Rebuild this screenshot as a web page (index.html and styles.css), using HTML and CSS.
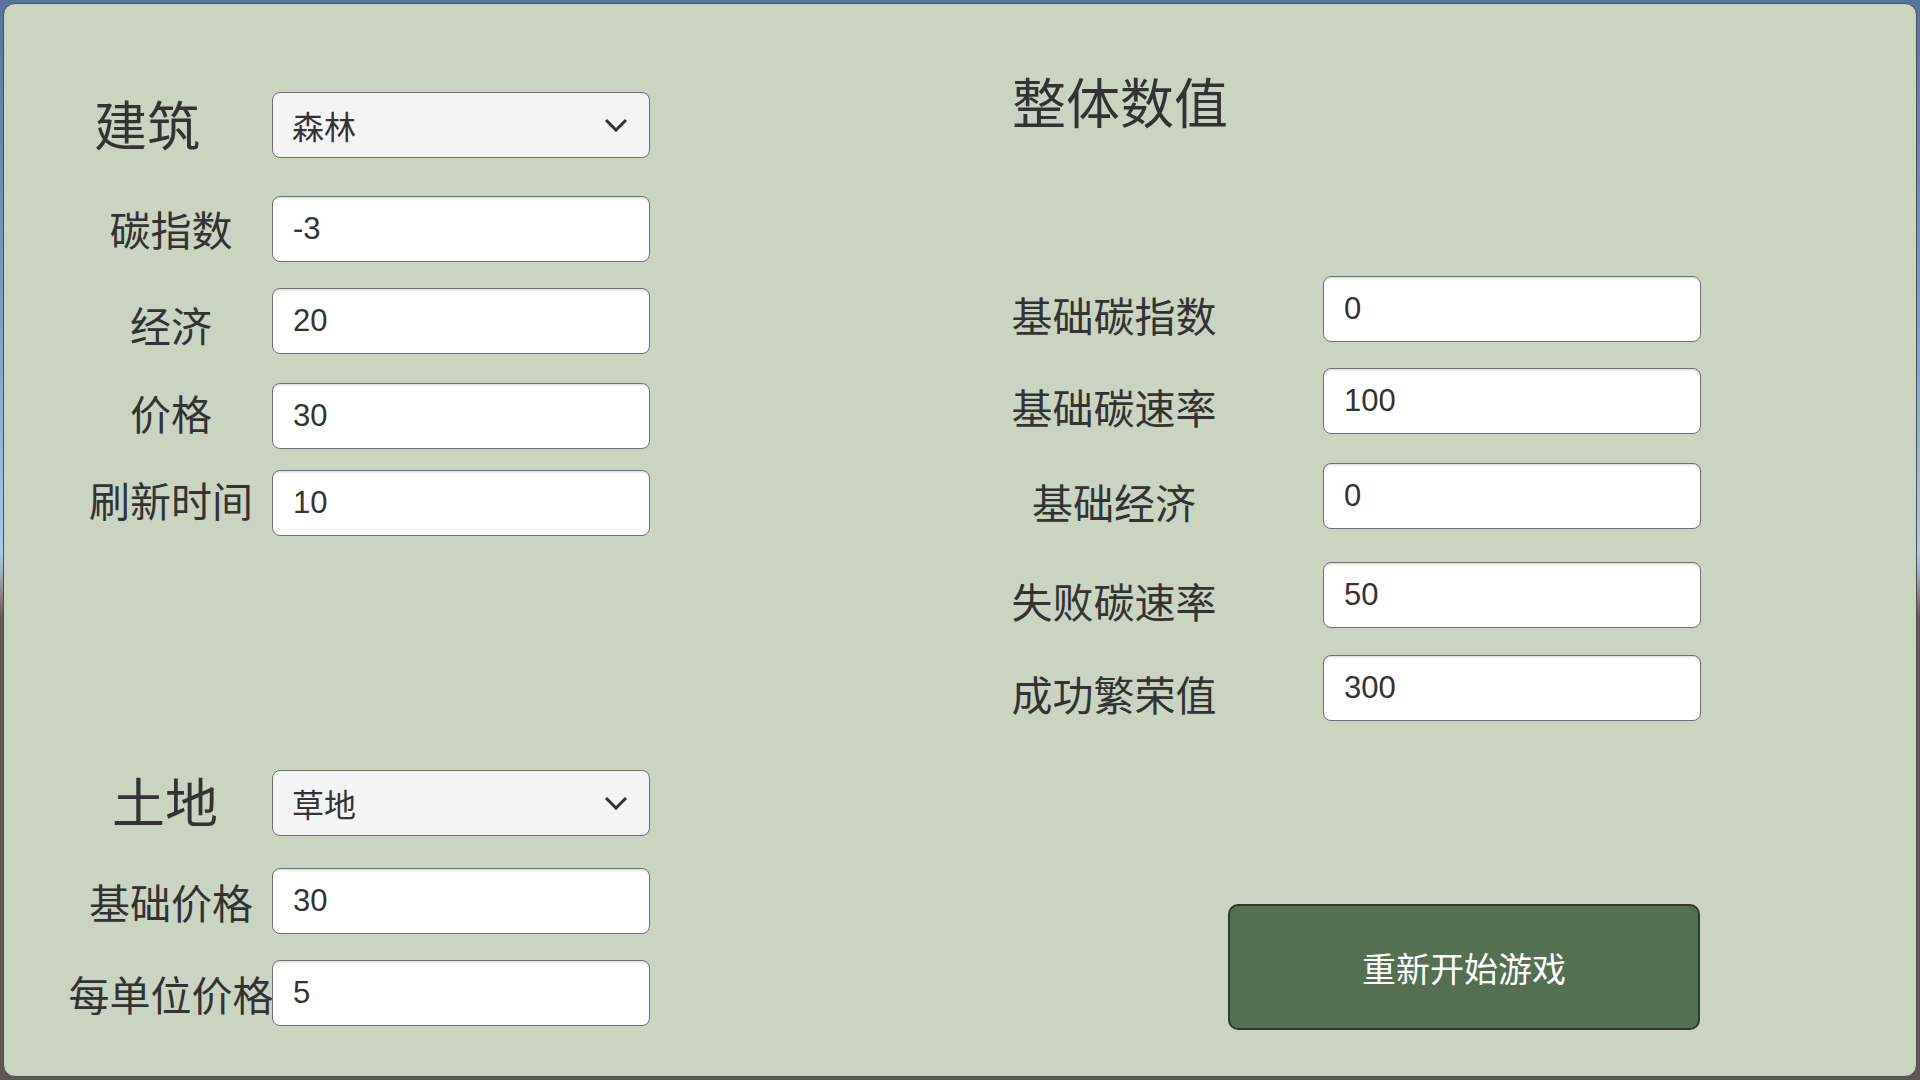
FILE: index.html
```html
<!DOCTYPE html>
<html lang="zh-CN">
<head>
<meta charset="utf-8">
<title>设置</title>
<link rel="stylesheet" href="styles.css">
</head>
<body>
<div class="panel">
  <div class="col-left">
    <div class="row">
      <div class="head head-build">建筑</div>
      <div class="select"><span>森林</span><svg class="chev" width="24" height="14" viewBox="0 0 24 14"><polyline points="2,2 12,12 22,2" fill="none" stroke="#333" stroke-width="3"/></svg></div>
    </div>
    <div class="row m38">
      <div class="label dy3">碳指数</div>
      <input class="field" type="text" value="-3">
    </div>
    <div class="row m26">
      <div class="label dy7">经济</div>
      <input class="field" type="text" value="20">
    </div>
    <div class="row m29">
      <div class="label">价格</div>
      <input class="field" type="text" value="30">
    </div>
    <div class="row m21">
      <div class="label">刷新时间</div>
      <input class="field" type="text" value="10">
    </div>
    <div class="row m234">
      <div class="head head-land">土地</div>
      <div class="select"><span>草地</span><svg class="chev" width="24" height="14" viewBox="0 0 24 14"><polyline points="2,2 12,12 22,2" fill="none" stroke="#333" stroke-width="3"/></svg></div>
    </div>
    <div class="row m32">
      <div class="label dy4">基础价格</div>
      <input class="field" type="text" value="30">
    </div>
    <div class="row m26">
      <div class="label dy4">每单位价格</div>
      <input class="field" type="text" value="5">
    </div>
  </div>
  <div class="col-right">
    <h2 class="title">整体数值</h2>
    <div class="row rrow m144">
      <div class="label rlabel dy9">基础碳指数</div>
      <input class="field" type="text" value="0">
    </div>
    <div class="row rrow m26">
      <div class="label rlabel dy9">基础碳速率</div>
      <input class="field" type="text" value="100">
    </div>
    <div class="row rrow m29">
      <div class="label rlabel dy9">基础经济</div>
      <input class="field" type="text" value="0">
    </div>
    <div class="row rrow m33">
      <div class="label rlabel dy9">失败碳速率</div>
      <input class="field" type="text" value="50">
    </div>
    <div class="row rrow m27">
      <div class="label rlabel dy9">成功繁荣值</div>
      <input class="field" type="text" value="300">
    </div>
    <button class="restart" type="button">重新开始游戏</button>
  </div>
</div>
</body>
</html>
```
FILE: styles.css
```css
* { box-sizing: border-box; }
html, body { margin: 0; padding: 0; }
body {
  width: 1920px;
  height: 1080px;
  overflow: hidden;
  font-family: "Liberation Sans", "Noto Sans CJK SC", sans-serif;
  color: #333333;
  background: linear-gradient(to bottom, #56749f 0%, #7d9fc8 30%, #a9c9ea 51%, #a0b4c4 53%, #8a8682 55%, #625b56 57%, #5d5652 100%);
  padding: 3px;
}
.panel {
  width: 1914px;
  height: 1074px;
  border: 1px solid #4e4e4e;
  border-radius: 12px;
  background: #c9d5c1;
  display: flex;
}
.col-left {
  width: 1000px;
  padding: 88px 0 0 66px;
  display: flex;
  flex-direction: column;
}
.col-right {
  flex: 1;
  padding-top: 74px;
  display: flex;
  flex-direction: column;
  align-items: flex-start;
}
.row {
  display: flex;
  align-items: center;
  height: 66px;
}
.m21 { margin-top: 21px; }
.m26 { margin-top: 26px; }
.m27 { margin-top: 27px; }
.m29 { margin-top: 29px; }
.m32 { margin-top: 32px; }
.m33 { margin-top: 33px; }
.m38 { margin-top: 38px; }
.m144 { margin-top: 144px; }
.m234 { margin-top: 234px; }

.label {
  width: 202px;
  display: flex;
  justify-content: center;
  white-space: nowrap;
  font-size: 41px;
  line-height: 41px;
  color: #333333;
}
.dy3 { padding-top: 6px; }
.dy4 { padding-top: 8px; }
.dy7 { padding-top: 14px; }
.dy9 { padding-top: 18px; }
.rlabel { width: 220px; margin-right: 99px; }

.head {
  width: 202px;
  font-size: 53px;
  line-height: 53px;
  white-space: nowrap;
  color: #333333;
}
.head-build { padding-left: 24px; padding-top: 4px; }
.head-land { padding-left: 42px; padding-top: 2px; }

.select {
  width: 378px;
  height: 66px;
  border: 1.5px solid #6f6f6f;
  border-radius: 8px;
  background: #f4f4f4;
  display: flex;
  align-items: center;
  justify-content: space-between;
  padding: 0 21px 0 19px;
  font-size: 32px;
  color: #333333;
}
.chev { display: block; }

.field {
  width: 378px;
  height: 66px;
  border: 1.5px solid #6f6f6f;
  border-radius: 8px;
  background: #ffffff;
  box-shadow: inset 0 3px 3px -2px rgba(0, 0, 0, 0.18);
  padding: 0 0 0 20px;
  font-family: "Liberation Sans", "Noto Sans CJK SC", sans-serif;
  font-size: 31px;
  color: #333333;
  outline: none;
}

.title {
  margin: 0;
  padding-left: 8px;
  font-size: 54px;
  line-height: 54px;
  font-weight: normal;
  color: #333333;
}

.restart {
  margin: 183px 0 0 224px;
  width: 472px;
  height: 126px;
  background: #537050;
  border: 2px solid #2f3b2d;
  border-radius: 10px;
  color: #ffffff;
  font-family: "Liberation Sans", "Noto Sans CJK SC", sans-serif;
  font-size: 34px;
  padding: 0;
}
```
